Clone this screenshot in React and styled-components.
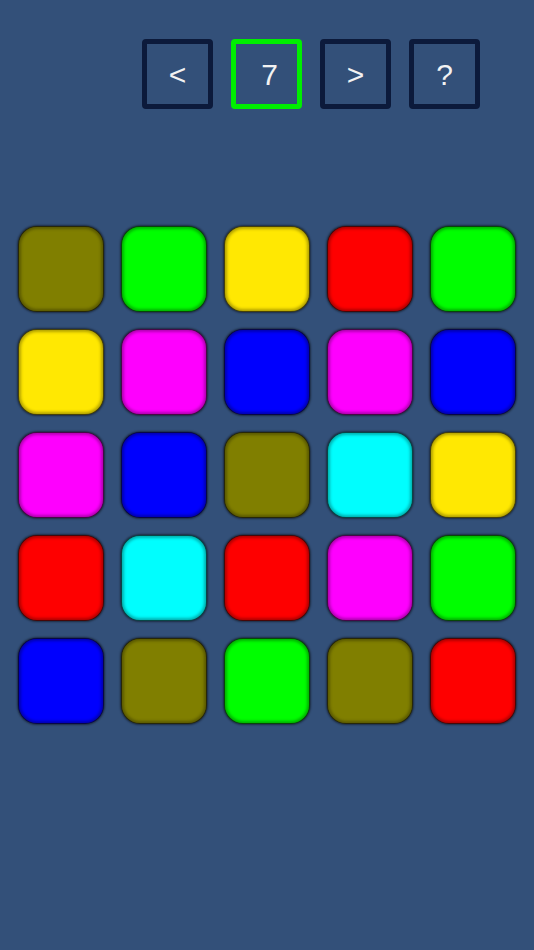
import React from "react";
import styled, { createGlobalStyle } from "styled-components";

const Global = createGlobalStyle`
  html, body { margin: 0; padding: 0; background: #335079; }
  body { font-family: "Liberation Sans", Arial, sans-serif; }
`;

const Page = styled.div`
  width: 534px;
  height: 950px;
  background: #335079;
  display: flex;
  flex-direction: column;
`;

const Toolbar = styled.div`
  display: flex;
  gap: 18px;
  padding: 39px 0 0 142px;
`;

const NavButton = styled.div`
  box-sizing: border-box;
  width: 71px;
  height: 70px;
  border: 5px solid ${(p) => (p.$active ? "#00ee00" : "#0c1a3b")};
  border-radius: 4px;
  display: flex;
  align-items: center;
  justify-content: center;
  color: #f2f2f2;
  font-size: 30px;
  padding-top: 2px;
  padding-left: ${(p) => (p.$active ? "6px" : "0")};
`;

const Grid = styled.div`
  display: grid;
  grid-template-columns: repeat(5, 86px);
  grid-auto-rows: 86px;
  gap: 17px;
  padding: 117px 0 0 18px;
`;

const Tile = styled.div`
  box-sizing: border-box;
  border-radius: 19px;
  background: ${(p) => p.$color};
  border: 1.5px solid rgba(10, 10, 10, 0.75);
  box-shadow: inset 0 0 3px 2px rgba(0, 0, 0, 0.3), 0 0 2px 1px rgba(0, 0, 0, 0.45);
`;

const C = {
  o: "#807f00",
  g: "#00fe00",
  y: "#ffe802",
  r: "#fe0000",
  m: "#fe00fe",
  b: "#0000fe",
  c: "#00fefe",
};

const rows = ["ogyrg", "ymbmb", "mbocy", "rcrmg", "bogor"];

export default function App() {
  return (
    <Page>
      <Global />
      <Toolbar>
        <NavButton>&lt;</NavButton>
        <NavButton $active>7</NavButton>
        <NavButton>&gt;</NavButton>
        <NavButton>?</NavButton>
      </Toolbar>
      <Grid>
        {rows.join("").split("").map((k, i) => (
          <Tile key={i} $color={C[k]} />
        ))}
      </Grid>
    </Page>
  );
}
